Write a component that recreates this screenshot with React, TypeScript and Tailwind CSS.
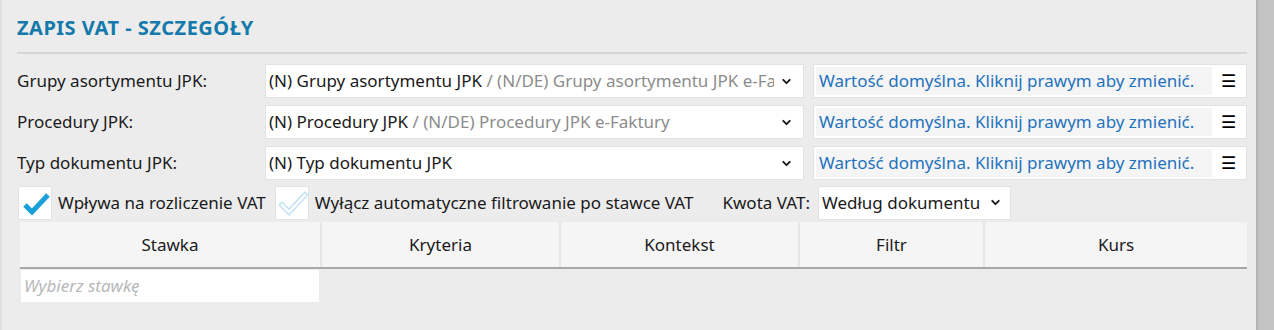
import React from "react";
import { ChevronDown } from "lucide-react";

const FONT = { fontFamily: '"Noto Sans", "Open Sans", sans-serif' };

interface JpkRow {
  label: string;
  value: string;
  extra?: string;
}

const rows: JpkRow[] = [
  { label: "Grupy asortymentu JPK:", value: "(N) Grupy asortymentu JPK", extra: "/ (N/DE) Grupy asortymentu JPK e-Faktury" },
  { label: "Procedury JPK:", value: "(N) Procedury JPK", extra: "/ (N/DE) Procedury JPK e-Faktury" },
  { label: "Typ dokumentu JPK:", value: "(N) Typ dokumentu JPK" },
];

const columns = [
  { name: "Stawka", w: "w-[300px]" },
  { name: "Kryteria", w: "w-[239px]" },
  { name: "Kontekst", w: "w-[239px]" },
  { name: "Filtr", w: "w-[185px]" },
  { name: "Kurs", w: "flex-1" },
];

const Check: React.FC<{ hollow?: boolean }> = ({ hollow }) => (
  <div className="w-[34px] h-[34px] bg-white border border-[#e3e3e3] shrink-0">
    <svg width="32" height="32" viewBox="0 0 32 32">
      {hollow ? (
        <>
          <path d="M6 18 L13 25 L29 8" fill="none" stroke="#c3e3f3" strokeWidth="5.5" strokeLinecap="square" />
          <path d="M6 18 L13 25 L29 8" fill="none" stroke="#ffffff" strokeWidth="2.5" strokeLinecap="square" />
        </>
      ) : (
        <path d="M6 18 L13 25 L29 8" fill="none" stroke="#1a9fd8" strokeWidth="5" strokeLinecap="butt" />
      )}
    </svg>
  </div>
);

const App: React.FC = () => {
  return (
    <div className="w-[1274px] h-[330px] bg-[#ececec] flex text-[#1a1a1a] overflow-hidden" style={FONT}>
      {/* main panel */}
      <div className="flex-1 border-l-2 border-[#e0e0e0] pl-[15px] pr-[9px]">
        <h1 className="text-[20px] font-bold text-[#1479ab] pt-[14px] leading-[28px] tracking-[0.5px]">
          ZAPIS VAT - SZCZEGÓŁY
        </h1>
        <div className="h-[2px] bg-[#d6d6d6] mt-[10px] mb-[10px]" />

        <div className="flex flex-col gap-[7px]">
          {rows.map((r) => (
            <div key={r.label} className="flex items-center h-[34px]">
              <div className="w-[248px] text-[17px]">{r.label}</div>
              <div className="w-[539px] h-[34px] bg-white border border-[#e2e2e2] flex items-center pl-[3px] pr-[10px]">
                <div className="flex-1 overflow-hidden whitespace-nowrap text-[17px]">
                  {r.value}
                  {r.extra && <span className="text-[#8c8c8c]"> {r.extra}</span>}
                </div>
                <ChevronDown size={13} strokeWidth={3.5} className="ml-[6px] shrink-0" />
              </div>
              <div className="ml-[9px] flex-1 h-[34px] bg-white border border-[#e2e2e2] flex p-[2px]">
                <div className="flex-1 bg-[#f5f5f5] text-[#1f72bd] text-[17px] flex items-center pl-[3px] whitespace-nowrap">
                  Wartość domyślna. Kliknij prawym aby zmienić.
                </div>
                <div className="w-[32px] flex items-center justify-center text-[17px] text-black">☰</div>
              </div>
            </div>
          ))}
        </div>

        <div className="flex items-center mt-[5px] h-[35px] pl-[1px]">
          <Check />
          <span className="ml-[6px] text-[17px] whitespace-nowrap">Wpływa na rozliczenie VAT</span>
          <div className="ml-[9px]">
            <Check hollow />
          </div>
          <span className="ml-[6px] text-[17px] whitespace-nowrap">Wyłącz automatyczne filtrowanie po stawce VAT</span>
          <span className="ml-[29px] text-[17px] whitespace-nowrap">Kwota VAT:</span>
          <div className="ml-[8px] w-[193px] h-[34px] bg-white border border-[#e2e2e2] flex items-center pl-[3px] pr-[8px]">
            <span className="flex-1 text-[17px] whitespace-nowrap overflow-hidden">Według dokumentu</span>
            <ChevronDown size={13} strokeWidth={3.5} className="shrink-0 ml-[4px]" />
          </div>
        </div>

        <div className="ml-[3px] mt-[2px] flex h-[47px] bg-[#f5f5f5] border-b-2 border-[#a8a8a8]">
          {columns.map((c, i) => (
            <div
              key={c.name}
              className={`${c.w} flex items-center justify-center text-[17px] ${i > 0 ? "border-l-2 border-[#e6e6e6]" : ""}`}
            >
              {c.name}
            </div>
          ))}
        </div>
        <div className="ml-[4px] mt-[1px] w-[298px] h-[32px] bg-white flex items-center pl-[3px] text-[17px] italic text-[#b8b8b8]">
          Wybierz stawkę
        </div>
      </div>

      {/* scrollbar */}
      <div className="w-[18px] bg-[#c3c3c3] border-l-2 border-[#b4b4b4]" />
    </div>
  );
};

export default App;
